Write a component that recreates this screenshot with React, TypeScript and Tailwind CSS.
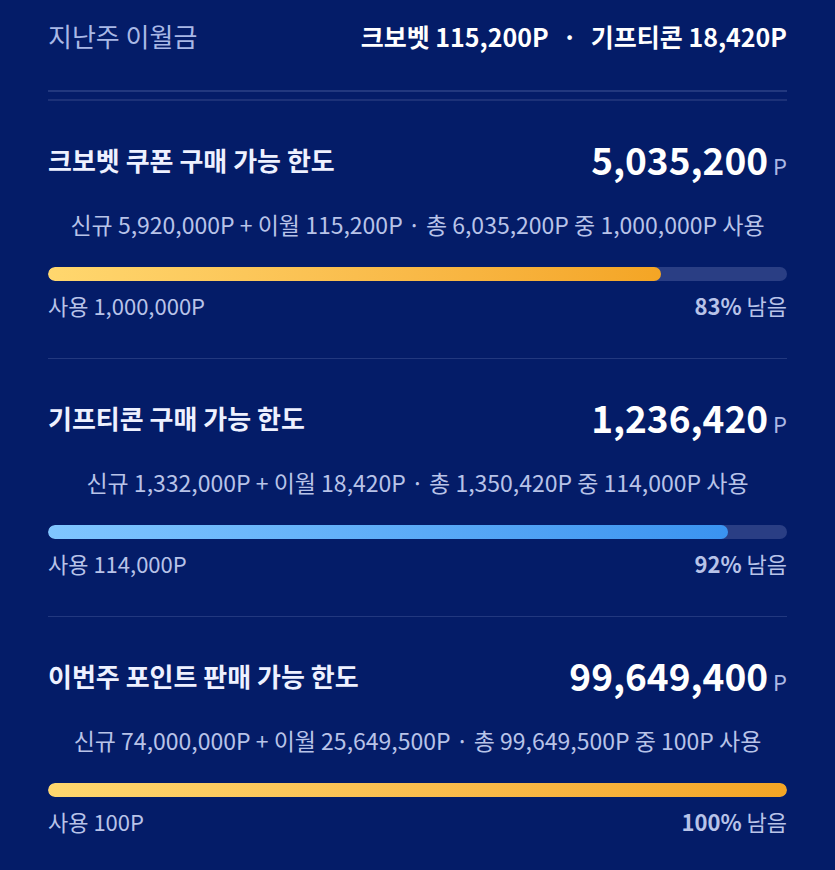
const font = { fontFamily: '"Noto Sans CJK KR", "Noto Sans", sans-serif' };

type Limit = {
  title: string;
  amount: string;
  detail: string;
  used: string;
  percent: number;
  left: string;
  bar: string;
};

const limits: Limit[] = [
  {
    title: "크보벳 쿠폰 구매 가능 한도",
    amount: "5,035,200",
    detail: "신규 5,920,000P + 이월 115,200P · 총 6,035,200P 중 1,000,000P 사용",
    used: "사용 1,000,000P",
    percent: 83,
    left: "83%",
    bar: "bg-gradient-to-r from-[#ffd76e] to-[#f4a524]",
  },
  {
    title: "기프티콘 구매 가능 한도",
    amount: "1,236,420",
    detail: "신규 1,332,000P + 이월 18,420P · 총 1,350,420P 중 114,000P 사용",
    used: "사용 114,000P",
    percent: 92,
    left: "92%",
    bar: "bg-gradient-to-r from-[#80c6ff] to-[#3a93f0]",
  },
  {
    title: "이번주 포인트 판매 가능 한도",
    amount: "99,649,400",
    detail: "신규 74,000,000P + 이월 25,649,500P · 총 99,649,500P 중 100P 사용",
    used: "사용 100P",
    percent: 100,
    left: "100%",
    bar: "bg-gradient-to-r from-[#ffd76e] to-[#f4a524]",
  },
];

function LimitSection({ item, last }: { item: Limit; last: boolean }) {
  return (
    <section className={`pt-[36px] pb-[39px] ${last ? "" : "border-b border-[#22387f]"}`}>
      <div className="flex h-[44px] items-center justify-between">
        <h2 className="text-[26px] font-semibold text-[#eef1ff]">{item.title}</h2>
        <p className="flex items-baseline gap-[5px]">
          <span className="text-[37px] font-bold leading-[44px] text-white">{item.amount}</span>
          <span className="text-[22px] text-[#aab8e4]">P</span>
        </p>
      </div>
      <p className="mt-[28px] text-center text-[23px] leading-[30px] text-[#b8c3e8]">{item.detail}</p>
      <div className="mt-[28px] h-[14px] overflow-hidden rounded-full bg-[#2a3e84]">
        <div className={`h-full rounded-full ${item.bar}`} style={{ width: `${item.percent}%` }} />
      </div>
      <div className="mt-[10px] flex items-center justify-between text-[22px] leading-[28px] text-[#b8c3e8]">
        <span>{item.used}</span>
        <span>
          <b className="font-bold">{item.left}</b> 남음
        </span>
      </div>
    </section>
  );
}

export default function App() {
  return (
    <main className="min-h-[870px] w-full bg-[#041c68] px-[48px]" style={font}>
      <header className="flex items-center justify-between border-b-2 border-[#22387f] pt-[20px] pb-[38px]">
        <span className="text-[26px] leading-[32px] text-[#a9b8e6]">지난주 이월금</span>
        <span className="text-[25px] font-bold leading-[32px] text-white">
          크보벳 115,200P <span className="mx-[8px]">·</span> 기프티콘 18,420P
        </span>
      </header>
      <div className="mt-[7px] border-t-2 border-[#1c3178]">
        {limits.map((item, i) => (
          <LimitSection key={item.title} item={item} last={i === limits.length - 1} />
        ))}
      </div>
    </main>
  );
}
